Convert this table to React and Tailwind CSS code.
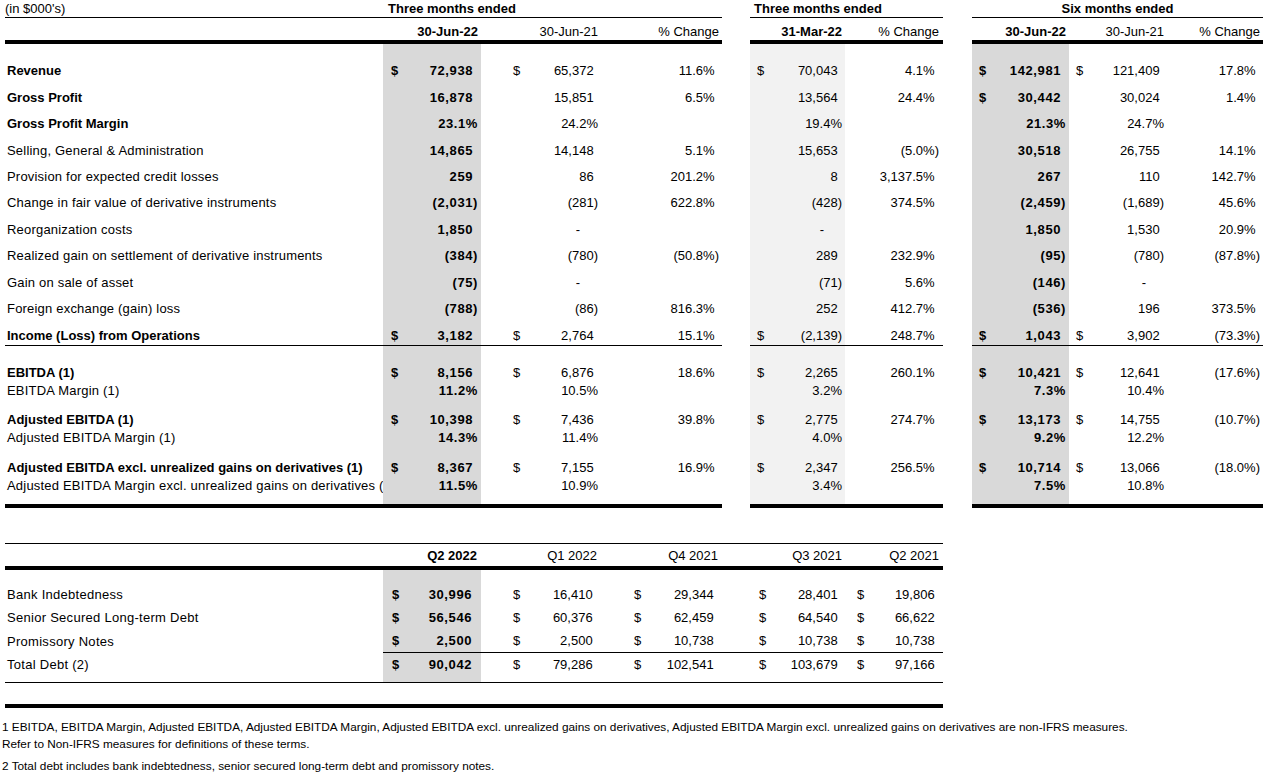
import React from 'react';

// Financial summary table (Excel-style export)

const LEFT = [
  { k: 'a', w: 'w-[98px]', pl: 'pl-[8px]', pr: 'pr-[3px]', bg: 'bg-[#d9d9d9]', bold: true, head: '30-Jun-22' },
  { k: 'b', w: 'w-[120px]', pl: 'pl-[32px]', pr: 'pr-[3px]', head: '30-Jun-21' },
  { k: 'c', w: 'w-[121px]', pl: '', pr: 'pr-[3px]', pct: true, head: '% Change' },
];
const MID = [
  { k: 'd', w: 'w-[95px]', pl: 'pl-[7px]', pr: 'pr-[3px]', bg: 'bg-[#f2f2f2]', boldHead: true, head: '31-Mar-22' },
  { k: 'e', w: 'w-[98px]', pl: '', pr: 'pr-[4px]', pct: true, head: '% Change' },
];
const RIGHT = [
  { k: 'f', w: 'w-[97px]', pl: 'pl-[7px]', pr: 'pr-[3px]', bg: 'bg-[#d9d9d9]', bold: true, head: '30-Jun-22' },
  { k: 'g', w: 'w-[98px]', pl: 'pl-[7px]', pr: 'pr-[3px]', head: '30-Jun-21' },
  { k: 'p', w: 'w-[96px]', pl: '', pr: 'pr-[3px]', pct: true, head: '% Change' },
];

const ROW = 'h-[26.4px]';
const PAIR = 'h-[18px]';
const MIDDLE = 'items-center';

const ROWS = [
  { ht: 'h-[13.8px]' },
  { ht: ROW, al: MIDDLE, label: 'Revenue', bold: true, a: '$ 72,938', b: '$ 65,372', c: '11.6%', d: '$ 70,043', e: '4.1%', f: '$ 142,981', g: '$ 121,409', p: '17.8%' },
  { ht: ROW, al: MIDDLE, label: 'Gross Profit', bold: true, a: '16,878', b: '15,851', c: '6.5%', d: '13,564', e: '24.4%', f: '$ 30,442', g: '30,024', p: '1.4%' },
  { ht: ROW, al: MIDDLE, label: 'Gross Profit Margin', bold: true, margin: true, a: '23.1%', b: '24.2%', d: '19.4%', f: '21.3%', g: '24.7%' },
  { ht: ROW, al: MIDDLE, label: 'Selling, General & Administration', a: '14,865', b: '14,148', c: '5.1%', d: '15,653', e: '(5.0%)', f: '30,518', g: '26,755', p: '14.1%' },
  { ht: ROW, al: MIDDLE, label: 'Provision for expected credit losses', a: '259', b: '86', c: '201.2%', d: '8', e: '3,137.5%', f: '267', g: '110', p: '142.7%' },
  { ht: ROW, al: MIDDLE, label: 'Change in fair value of derivative instruments', a: '(2,031)', b: '(281)', c: '622.8%', d: '(428)', e: '374.5%', f: '(2,459)', g: '(1,689)', p: '45.6%' },
  { ht: ROW, al: MIDDLE, label: 'Reorganization costs', a: '1,850', b: '-', d: '-', f: '1,850', g: '1,530', p: '20.9%' },
  { ht: ROW, al: MIDDLE, label: 'Realized gain on settlement of derivative instruments', a: '(384)', b: '(780)', c: '(50.8%)', d: '289', e: '232.9%', f: '(95)', g: '(780)', p: '(87.8%)' },
  { ht: ROW, al: MIDDLE, label: 'Gain on sale of asset', a: '(75)', b: '-', d: '(71)', e: '5.6%', f: '(146)', g: '-' },
  { ht: ROW, al: MIDDLE, label: 'Foreign exchange (gain) loss', a: '(788)', b: '(86)', c: '816.3%', d: '252', e: '412.7%', f: '(536)', g: '196', p: '373.5%' },
  { ht: 'h-[24.2px] border-b border-black', al: 'items-end pb-[2px]', label: 'Income (Loss) from Operations', bold: true, a: '$ 3,182', b: '$ 2,764', c: '15.1%', d: '$ (2,139)', e: '248.7%', f: '$ 1,043', g: '$ 3,902', p: '(73.3%)' },
  { ht: 'h-[18px]' },
  { ht: PAIR, al: MIDDLE, label: 'EBITDA (1)', bold: true, a: '$ 8,156', b: '$ 6,876', c: '18.6%', d: '$ 2,265', e: '260.1%', f: '$ 10,421', g: '$ 12,641', p: '(17.6%)' },
  { ht: PAIR, al: MIDDLE, label: 'EBITDA Margin (1)', margin: true, a: '11.2%', b: '10.5%', d: '3.2%', f: '7.3%', g: '10.4%' },
  { ht: 'h-[11px]' },
  { ht: PAIR, al: MIDDLE, label: 'Adjusted EBITDA (1)', bold: true, a: '$ 10,398', b: '$ 7,436', c: '39.8%', d: '$ 2,775', e: '274.7%', f: '$ 13,173', g: '$ 14,755', p: '(10.7%)' },
  { ht: PAIR, al: MIDDLE, label: 'Adjusted EBITDA Margin (1)', margin: true, a: '14.3%', b: '11.4%', d: '4.0%', f: '9.2%', g: '12.2%' },
  { ht: 'h-[12px]' },
  { ht: PAIR, al: MIDDLE, label: 'Adjusted EBITDA excl. unrealized gains on derivatives (1)', bold: true, a: '$ 8,367', b: '$ 7,155', c: '16.9%', d: '$ 2,347', e: '256.5%', f: '$ 10,714', g: '$ 13,066', p: '(18.0%)' },
  { ht: PAIR, al: MIDDLE, label: 'Adjusted EBITDA Margin excl. unrealized gains on derivatives (1)', margin: true, a: '11.5%', b: '10.9%', d: '3.4%', f: '7.5%', g: '10.8%' },
  { ht: 'h-[13px] border-b-4 border-black' },
];

// bottom debt table
const DEBT_COLS = [
  { k: 'a', w: 'w-[98px]', pl: 'pl-[9px]', pr: 'pr-[4px]', bg: 'bg-[#d9d9d9]', bold: true, head: 'Q2 2022' },
  { k: 'b', w: 'w-[120px]', pl: 'pl-[32px]', pr: 'pr-[4px]', head: 'Q1 2022' },
  { k: 'c', w: 'w-[121px]', pl: 'pl-[33px]', pr: 'pr-[4px]', head: 'Q4 2021' },
  { k: 'd', w: 'w-[123px]', pl: 'pl-[37px]', pr: 'pr-[3px]', head: 'Q3 2021' },
  { k: 'e', w: 'w-[98px]', pl: 'pl-[12px]', pr: 'pr-[4px]', head: 'Q2 2021' },
];

const DEBT_ROWS = [
  { ht: 'h-[13.5px]' },
  { ht: 'h-[23px]', al: MIDDLE, label: 'Bank Indebtedness', a: '$ 30,996', b: '$ 16,410', c: '$ 29,344', d: '$ 28,401', e: '$ 19,806' },
  { ht: 'h-[23px]', al: MIDDLE, label: 'Senior Secured Long-term Debt', a: '$ 56,546', b: '$ 60,376', c: '$ 62,459', d: '$ 64,540', e: '$ 66,622' },
  { ht: 'h-[23.5px]', al: MIDDLE, rule: true, label: 'Promissory Notes', a: '$ 2,500', b: '$ 2,500', c: '$ 10,738', d: '$ 10,738', e: '$ 10,738' },
  { ht: 'h-[23px]', al: MIDDLE, label: 'Total Debt (2)', a: '$ 90,042', b: '$ 79,286', c: '$ 102,541', d: '$ 103,679', e: '$ 97,166' },
  { ht: 'h-[7px]' },
];

function Amount({ v, margin, pct, bold }) {
  if (!v) return null;
  let s = v;
  let dollar = false;
  if (s.startsWith('$ ')) {
    dollar = true;
    s = s.slice(2);
  }
  let tail = null;
  if (s === '-') tail = <span className="inline-block w-[18px]" />;
  else if (!s.startsWith('(') && (pct || !margin)) tail = <span className="invisible">)</span>;
  return (
    <>
      <span>{dollar ? '$' : ''}</span>
      <span className={bold ? 'tracking-[0.6px]' : ''}>
        {s}
        {tail}
      </span>
    </>
  );
}

function Cells({ cols, row }) {
  return cols.map((c) => (
    <div
      key={c.k}
      className={`flex justify-between ${row.al || ''} ${c.w} ${c.pl} ${c.pr} ${c.bg || ''} ${c.bold ? 'font-bold' : ''} ${
        row.rule ? 'border-b border-black' : ''
      }`}
    >
      <Amount v={row[c.k]} margin={row.margin} pct={c.pct} bold={c.bold} />
    </div>
  ));
}

function Section({ cols, label, title, titleClass }) {
  return (
    <div className="flex flex-col">
      {/* group heading */}
      <div className="flex h-[18px] items-center border-b border-black">
        {label && <div className="w-[378px]">(in $000's)</div>}
        <div className={`flex-1 font-bold ${titleClass}`}>{title}</div>
      </div>
      {/* dates */}
      <div className="flex h-[26px] items-end border-b-4 border-black pb-[1px]">
        {label && <div className="w-[378px]" />}
        {cols.map((c) => (
          <div key={c.k} className={`${c.w} ${c.pr} text-right ${c.bold || c.boldHead ? 'font-bold' : ''}`}>
            {c.head}
          </div>
        ))}
      </div>
      {ROWS.map((r, i) => (
        <div key={i} className={`flex ${r.ht}`}>
          {label && (
            <div
              className={`flex w-[378px] overflow-hidden whitespace-nowrap pl-[2px] ${r.al || ''} ${
                r.bold ? 'font-bold' : 'tracking-[0.2px]'
              }`}
            >
              {r.label}
            </div>
          )}
          <Cells cols={cols} row={r} />
        </div>
      ))}
    </div>
  );
}

export default function App() {
  return (
    <div className="h-[772px] w-[1275px] overflow-hidden bg-white font-['Liberation_Sans',Arial,sans-serif] text-[13px] leading-[15px] text-black">
      {/* main results table */}
      <div className="flex pl-[5px]">
        <Section cols={LEFT} label title="Three months ended" titleClass="pl-[5px]" />
        <div className="w-[28px]" />
        <Section cols={MID} title="Three months ended" titleClass="pl-[4px]" />
        <div className="w-[29px]" />
        <Section cols={RIGHT} title="Six months ended" titleClass="text-center" />
      </div>

      {/* debt table */}
      <div className="ml-[5px] mt-[35px] w-[938px] border-t border-black">
        <div className="flex h-[26px] items-end border-b-4 border-black pb-[3px]">
          <div className="w-[378px]" />
          {DEBT_COLS.map((c) => (
            <div key={c.k} className={`${c.w} ${c.pr} text-right ${c.bold ? 'font-bold' : ''}`}>
              {c.head}
            </div>
          ))}
        </div>
        {DEBT_ROWS.map((r, i) => (
          <div key={i} className={`flex ${r.ht} ${i === DEBT_ROWS.length - 1 ? 'border-b border-black' : ''}`}>
            <div className={`flex w-[378px] whitespace-nowrap pl-[2px] tracking-[0.28px] ${r.al || ''}`}>{r.label}</div>
            <Cells cols={DEBT_COLS} row={r} />
          </div>
        ))}
      </div>

      {/* footnotes */}
      <div className="ml-[5px] mt-[21px] w-[938px] border-t-4 border-black" />
      <div className="mt-[11.5px] pl-[2px] text-[11.8px] leading-[17px]">
        <p>
          1 EBITDA, EBITDA Margin, Adjusted EBITDA, Adjusted EBITDA Margin, Adjusted EBITDA excl. unrealized gains on
          derivatives, Adjusted EBITDA Margin excl. unrealized gains on derivatives are non-IFRS measures.
        </p>
        <p>Refer to Non-IFRS measures for definitions of these terms.</p>
        <p className="mt-[5px]">2 Total debt includes bank indebtedness, senior secured long-term debt and promissory notes.</p>
      </div>
    </div>
  );
}
